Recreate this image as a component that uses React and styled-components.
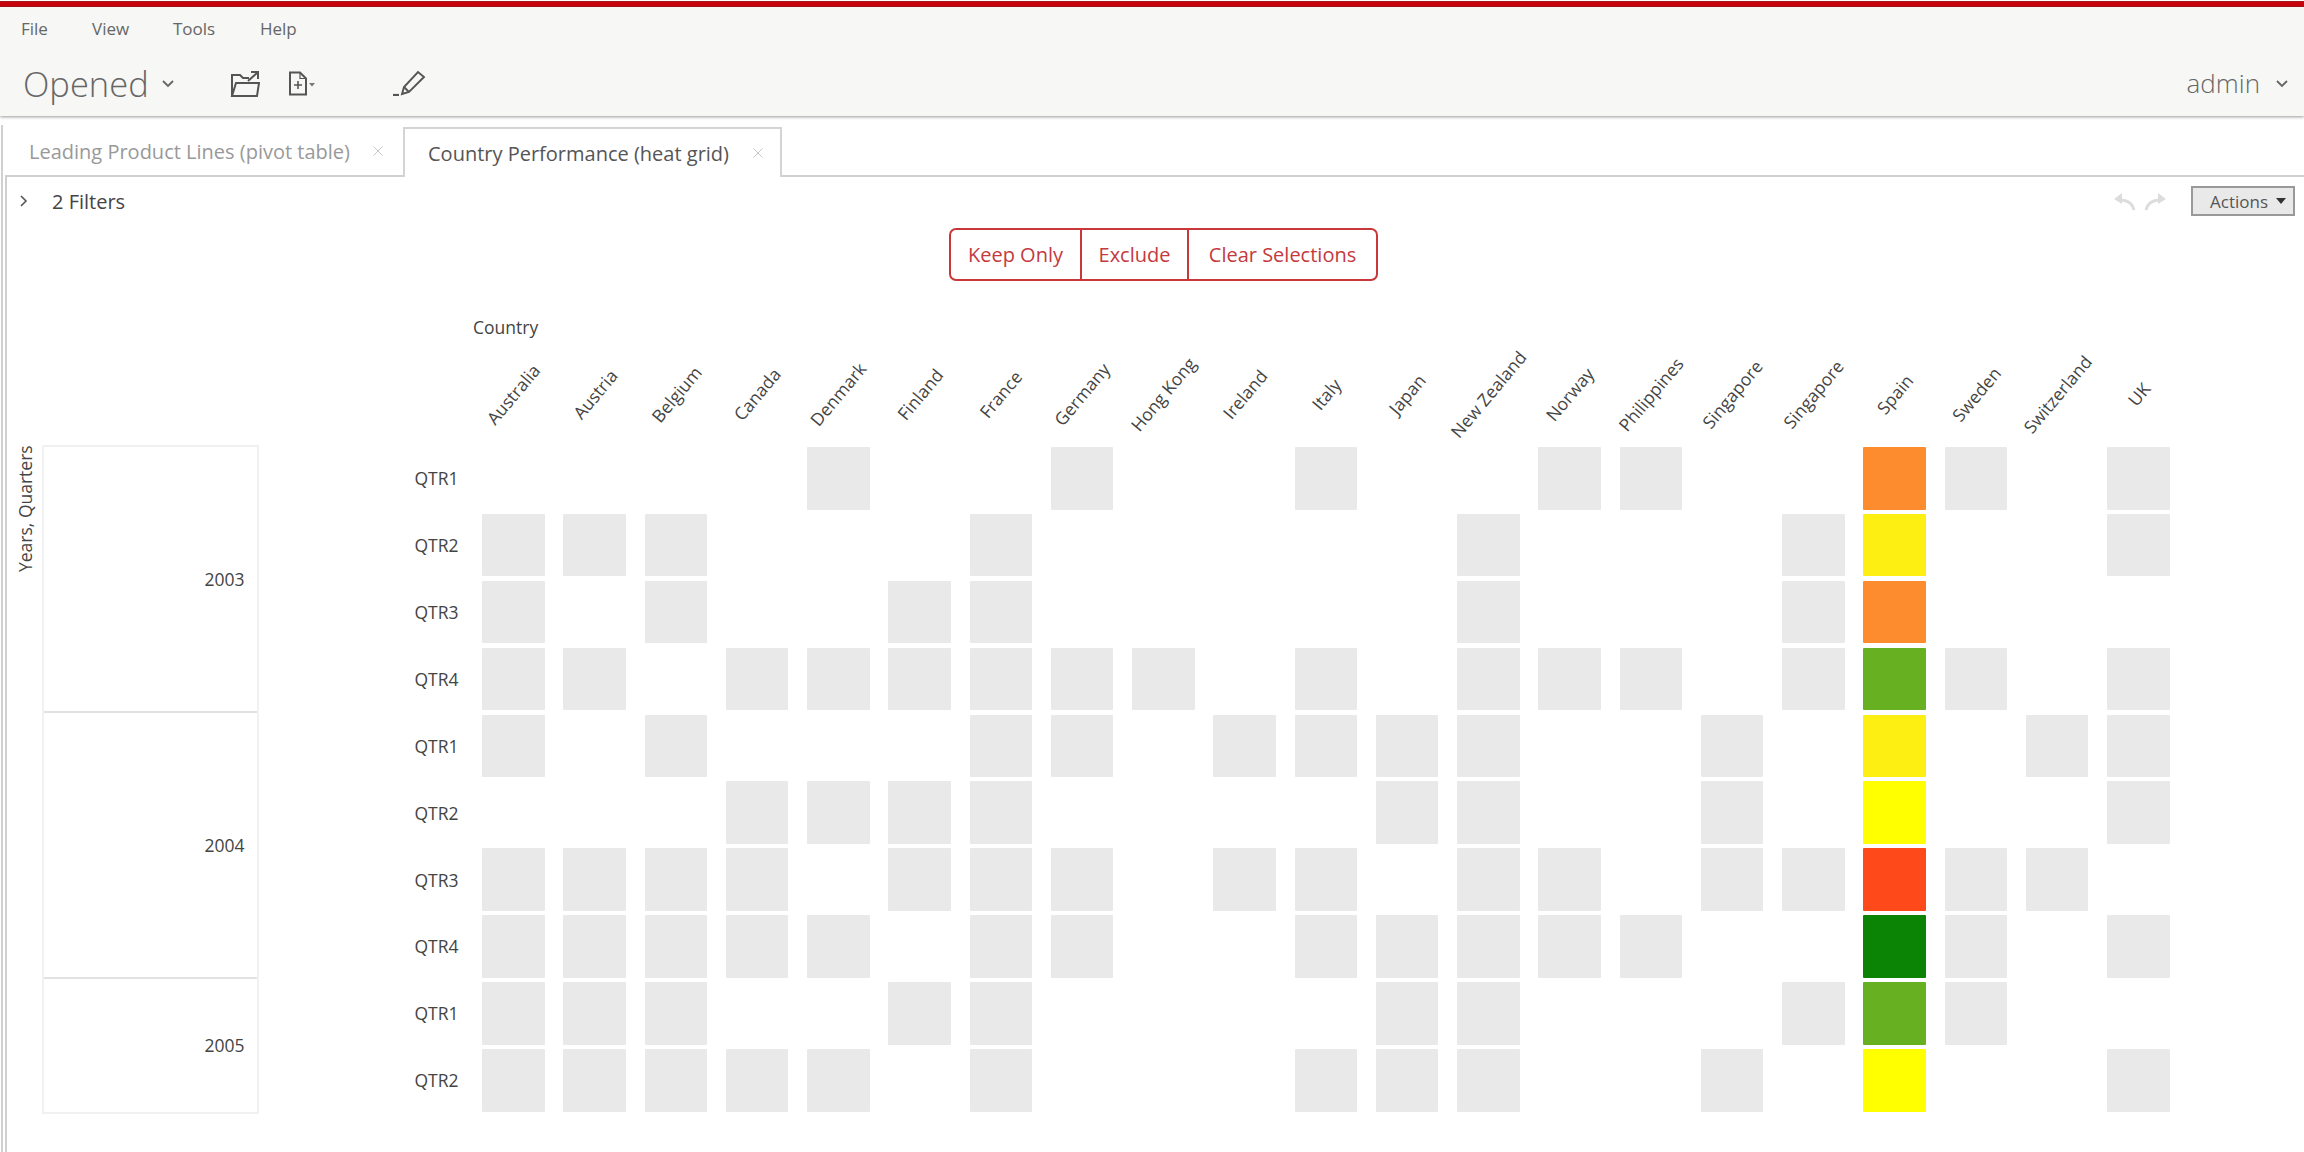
import React from 'react';
import styled, { createGlobalStyle } from 'styled-components';

const Global = createGlobalStyle`
  html, body { margin: 0; padding: 0; background: #fff; overflow: hidden; }
  body { font-family: "Open Sans", "Liberation Sans", sans-serif; color: #444; }
  * { box-sizing: border-box; }
`;

const Page = styled.div`width: 2304px; height: 1152px; overflow: hidden; display: flex; flex-direction: column; padding-top: 1px;`;
const RedBar = styled.div`height: 6px; flex: none; background: #c8040c; border-top: 1px solid #a8181c; border-bottom: 1px solid #b01418;`;
const Header = styled.header`
  height: 109px; flex: none; background: #f7f7f5; box-shadow: 0 1px 3px rgba(0,0,0,.4);
  display: flex; flex-direction: column; position: relative; z-index: 1;
`;
const MenuBar = styled.nav`height: 43px; flex: none; display: flex; align-items: center; padding: 0 0 0 21px;`;
const MenuItem = styled.span`font-size: 17px; color: #666; width: ${p => p.$w}px;`;
const ToolBar = styled.div`flex: 1; display: flex; align-items: center; padding: 0 15px 0 23px;`;
const Title = styled.span`font-size: 34.5px; font-weight: 300; color: #666; line-height: 1; margin-top: 3px;`;
const TitleChevron = styled.svg`width: 14px; height: 9px; margin-left: 12px; margin-top: 1px; flex: none;`;
const ToolIcon = styled.svg`flex: none; margin-left: ${p => p.$ml}px;`;
const Spacer = styled.div`flex: 1;`;
const UserName = styled.span`font-size: 26px; font-weight: 300; color: #666; line-height: 1;`;
const UserChevron = styled.svg`width: 14px; height: 9px; margin-left: 15px;`;

const Main = styled.main`flex: 1; min-height: 0; display: flex; flex-direction: column; margin-left: 1px; border-left: 2px solid #d0d0d0; margin-top: 9px;`;
const TabStrip = styled.div`height: 50px; flex: none; display: flex; padding-top: 2px;`;
const Tab = styled.div`
  height: 48px; display: flex; align-items: center; flex: none; font-size: 20px;
  width: ${p => p.$w}px; padding-left: ${p => p.$pl}px;
  color: ${p => p.$active ? '#555' : '#999'};
  background: #fff;
  ${p => p.$active ? 'border: 2px solid #d4d4d4; border-bottom: none; margin-bottom: -2px; height: 50px; position: relative; z-index: 1;' : ''}
`;
const TabName = styled.span`white-space: nowrap;`;
const TabClose = styled.svg`width: 12px; height: 12px; margin-left: ${p => p.$ml}px; flex: none;`;
const Panel = styled.section`flex: 1; min-height: 0; margin-left: 2px; border-left: 2px solid #d0d0d0; border-top: 2px solid #d0d0d0; display: flex; flex-direction: column;`;
const FilterBar = styled.div`height: 48px; flex: none; display: flex; align-items: center; padding: 0 9px 0 12px;`;
const FilterChevron = styled.svg`width: 10px; height: 14px; flex: none;`;
const FilterText = styled.span`font-size: 20px; color: #444; margin-left: 23px;`;
const HistoryIcon = styled.svg`flex: none; margin-left: ${p => p.$ml}px;`;
const ActionsButton = styled.button`
  width: 104px; height: 30px; margin-left: 23px; border: 2px solid #999; background: #e9e9e9; color: #555;
  font: 17px "Open Sans", sans-serif; padding: 0 0 0 17px; display: flex; align-items: center; flex: none;
`;
const Caret = styled.span`width: 0; height: 0; margin-left: 8px; border-left: 5px solid transparent; border-right: 5px solid transparent; border-top: 6px solid #333;`;
const SelectionRow = styled.div`height: 53px; flex: none; display: flex; padding-left: 942px; margin-top: 2.5px;`;
const SelectionGroup = styled.div`display: flex; width: 429px; border: 2px solid #c8383a; border-radius: 7px; overflow: hidden;`;
const SelectionButton = styled.div`
  font-size: 20px; color: #c43a3e; display: flex; align-items: center; justify-content: center; flex: none; width: ${p => p.$w}px;
  & + & { border-left: 2px solid #c8383a; }
`;
const CountryTitle = styled.div`height: 24px; flex: none; margin: 34px 0 0 466px; font-size: 17.5px; line-height: 24px; color: #444;`;
const ColumnHead = styled.div`
  height: 104px; flex: none; margin: 3.5px 0 0 475px; display: grid;
  grid-template-columns: repeat(21, 62.5px); column-gap: 18.75px;
`;
const ColumnLabel = styled.div`display: flex; align-items: center; justify-content: center; height: 104px; min-width: 0;`;
const ColumnText = styled.span`font-size: 17.5px; color: #444; white-space: nowrap; transform: rotate(-50deg); flex: none;`;

const ChartBody = styled.div`height: 669px; margin-top: -1.5px; flex: none; display: flex;`;
const AxisTitle = styled.div`
  width: 34.5px; flex: none; writing-mode: vertical-rl; transform: rotate(180deg); font-size: 17.5px; color: #444;
  text-align: right; padding-right: 6px; white-space: nowrap; line-height: 24px;
`;
const YearColumn = styled.div`width: 217px; flex: none; display: flex; flex-direction: column; border: 2px solid #f1f1f1;`;
const YearBox = styled.div`
  flex: ${p => p.$span}; display: flex; align-items: center; justify-content: flex-end; padding-right: 12px; font-size: 17.5px; color: #444;
  & + & { border-top: 2px solid #e2e2e2; }
`;
const QuarterColumn = styled.div`width: 200px; flex: none; padding-top: 2.5px; display: grid; grid-auto-rows: 62.5px; row-gap: 4.4px;`;
const QuarterLabel = styled.div`font-size: 17.5px; color: #444; display: flex; align-items: center; justify-content: flex-end;`;
const HeatGrid = styled.div`
  margin-left: 23.5px; padding-top: 2.5px; display: grid; align-content: start;
  grid-template-columns: repeat(21, 62.5px); grid-auto-rows: 62.5px; column-gap: 18.75px; row-gap: 4.4px;
`;
const HeatCell = styled.div`background: ${p => p.$c || 'transparent'}; border-radius: 1px;`;

const countries = ['Australia','Austria','Belgium','Canada','Denmark','Finland','France','Germany','Hong Kong','Ireland','Italy','Japan','New Zealand','Norway','Philippines','Singapore','Singapore','Spain','Sweden','Switzerland','UK'];
const G = '#e9e9e9';
const spain = ['#fd8c2f','#feef12','#fd8c2f','#67b021','#feef12','#ffff00','#fe4a1a','#0b8405','#67b021','#ffff00'];
const rows = [
  { q: 'QTR1', c: [4,7,10,13,14,18,20] },
  { q: 'QTR2', c: [0,1,2,6,12,16,20] },
  { q: 'QTR3', c: [0,2,5,6,12,16] },
  { q: 'QTR4', c: [0,1,3,4,5,6,7,8,10,12,13,14,16,18,20] },
  { q: 'QTR1', c: [0,2,6,7,9,10,11,12,15,19,20] },
  { q: 'QTR2', c: [3,4,5,6,11,12,15,20] },
  { q: 'QTR3', c: [0,1,2,3,5,6,7,9,10,12,13,15,16,18,19] },
  { q: 'QTR4', c: [0,1,2,3,4,6,7,10,11,12,13,14,18,20] },
  { q: 'QTR1', c: [0,1,2,5,6,11,12,16,18] },
  { q: 'QTR2', c: [0,1,2,3,4,6,10,11,12,15,20] },
];

const CloseX = ({ ml }) => (
  <TabClose $ml={ml} viewBox="0 0 12 12" fill="none"><path d="M1.5 1.5l9 9M10.500 1.500l-9 9" stroke="#c8c8c8" strokeWidth="1" /></TabClose>
);

export default function App() {
  return (
    <Page>
      <Global />
      <RedBar />
      <Header>
        <MenuBar>
          <MenuItem $w={71}>File</MenuItem>
          <MenuItem $w={81}>View</MenuItem>
          <MenuItem $w={87}>Tools</MenuItem>
          <MenuItem $w={40}>Help</MenuItem>
        </MenuBar>
        <ToolBar>
          <Title>Opened</Title>
          <TitleChevron viewBox="0 0 14 9" fill="none"><path d="M2 2l5 5 5-5" stroke="#666" strokeWidth="1.8" /></TitleChevron>
          <ToolIcon $ml={55} width="30" height="27" viewBox="0 0 30 27" fill="none" stroke="#555" strokeWidth="2">
            <path d="M2 26V5h8l3 3h6" />
            <path d="M2 26l4-13h23l-2 13z" />
            <path d="M18 11l9-8M21 2h7v7" />
          </ToolIcon>
          <ToolIcon $ml={28} width="28" height="25" viewBox="0 0 28 25" fill="none" stroke="#555" strokeWidth="2">
            <path d="M2 1.500h10l6 6v16H2z" />
            <path d="M12 1.500v6h6" strokeWidth="1.200" />
            <path d="M6 14h8M10 10v8" strokeWidth="1.600" />
            <path d="M21 12l3 3.500 3-3.500z" fill="#777" stroke="none" />
          </ToolIcon>
          <ToolIcon $ml={76} width="34" height="26" viewBox="0 0 34 26" fill="none" stroke="#555" strokeWidth="1.900">
            <path d="M1 25h6" strokeWidth="2.200" />
            <path d="M10 24l2-7L26 2l6 5-15 15z" />
            <path d="M12 17l5 5" />
          </ToolIcon>
          <Spacer />
          <UserName>admin</UserName>
          <UserChevron viewBox="0 0 14 9" fill="none"><path d="M2 2l5 5 5-5" stroke="#666" strokeWidth="1.8" /></UserChevron>
        </ToolBar>
      </Header>
      <Main>
        <TabStrip>
          <Tab $w={400} $pl={26}>
            <TabName>Leading Product Lines (pivot table)</TabName>
            <CloseX ml={22} />
          </Tab>
          <Tab $active $w={379} $pl={23}>
            <TabName>Country Performance (heat grid)</TabName>
            <CloseX ml={23} />
          </Tab>
        </TabStrip>
        <Panel>
          <FilterBar>
            <FilterChevron viewBox="0 0 10 14"><path d="M2 2l5 5-5 5" stroke="#555" strokeWidth="1.6" fill="none" /></FilterChevron>
            <FilterText>2 Filters</FilterText>
            <Spacer />
            <HistoryIcon $ml={0} width="24" height="20" viewBox="0 0 24 20" fill="none">
              <path d="M22 19c-1-5-5-9-12-10" stroke="#dcdcdc" strokeWidth="3" />
              <path d="M10 2L2 8l8 5z" fill="#dcdcdc" />
            </HistoryIcon>
            <HistoryIcon $ml={8} width="24" height="20" viewBox="0 0 24 20" fill="none">
              <path d="M2 19c1-5 5-9 12-10" stroke="#dcdcdc" strokeWidth="3" />
              <path d="M14 2l8 6-8 5z" fill="#dcdcdc" />
            </HistoryIcon>
            <ActionsButton>Actions<Caret /></ActionsButton>
          </FilterBar>
          <SelectionRow>
            <SelectionGroup>
              <SelectionButton $w={129}>Keep Only</SelectionButton>
              <SelectionButton $w={107}>Exclude</SelectionButton>
              <SelectionButton $w={189}>Clear Selections</SelectionButton>
            </SelectionGroup>
          </SelectionRow>
          <CountryTitle>Country</CountryTitle>
          <ColumnHead>
            {countries.map((c, i) => <ColumnLabel key={i}><ColumnText>{c}</ColumnText></ColumnLabel>)}
          </ColumnHead>
          <ChartBody>
            <AxisTitle>Years, Quarters</AxisTitle>
            <YearColumn>
              <YearBox $span={4}>2003</YearBox>
              <YearBox $span={4}>2004</YearBox>
              <YearBox $span={2}>2005</YearBox>
            </YearColumn>
            <QuarterColumn>
              {rows.map((r, i) => <QuarterLabel key={i}>{r.q}</QuarterLabel>)}
            </QuarterColumn>
            <HeatGrid>
              {rows.map((r, i) => countries.map((_, j) => (
                <HeatCell key={`${i}-${j}`} $c={j === 17 ? spain[i] : r.c.includes(j) ? G : null} />
              )))}
            </HeatGrid>
          </ChartBody>
        </Panel>
      </Main>
    </Page>
  );
}
